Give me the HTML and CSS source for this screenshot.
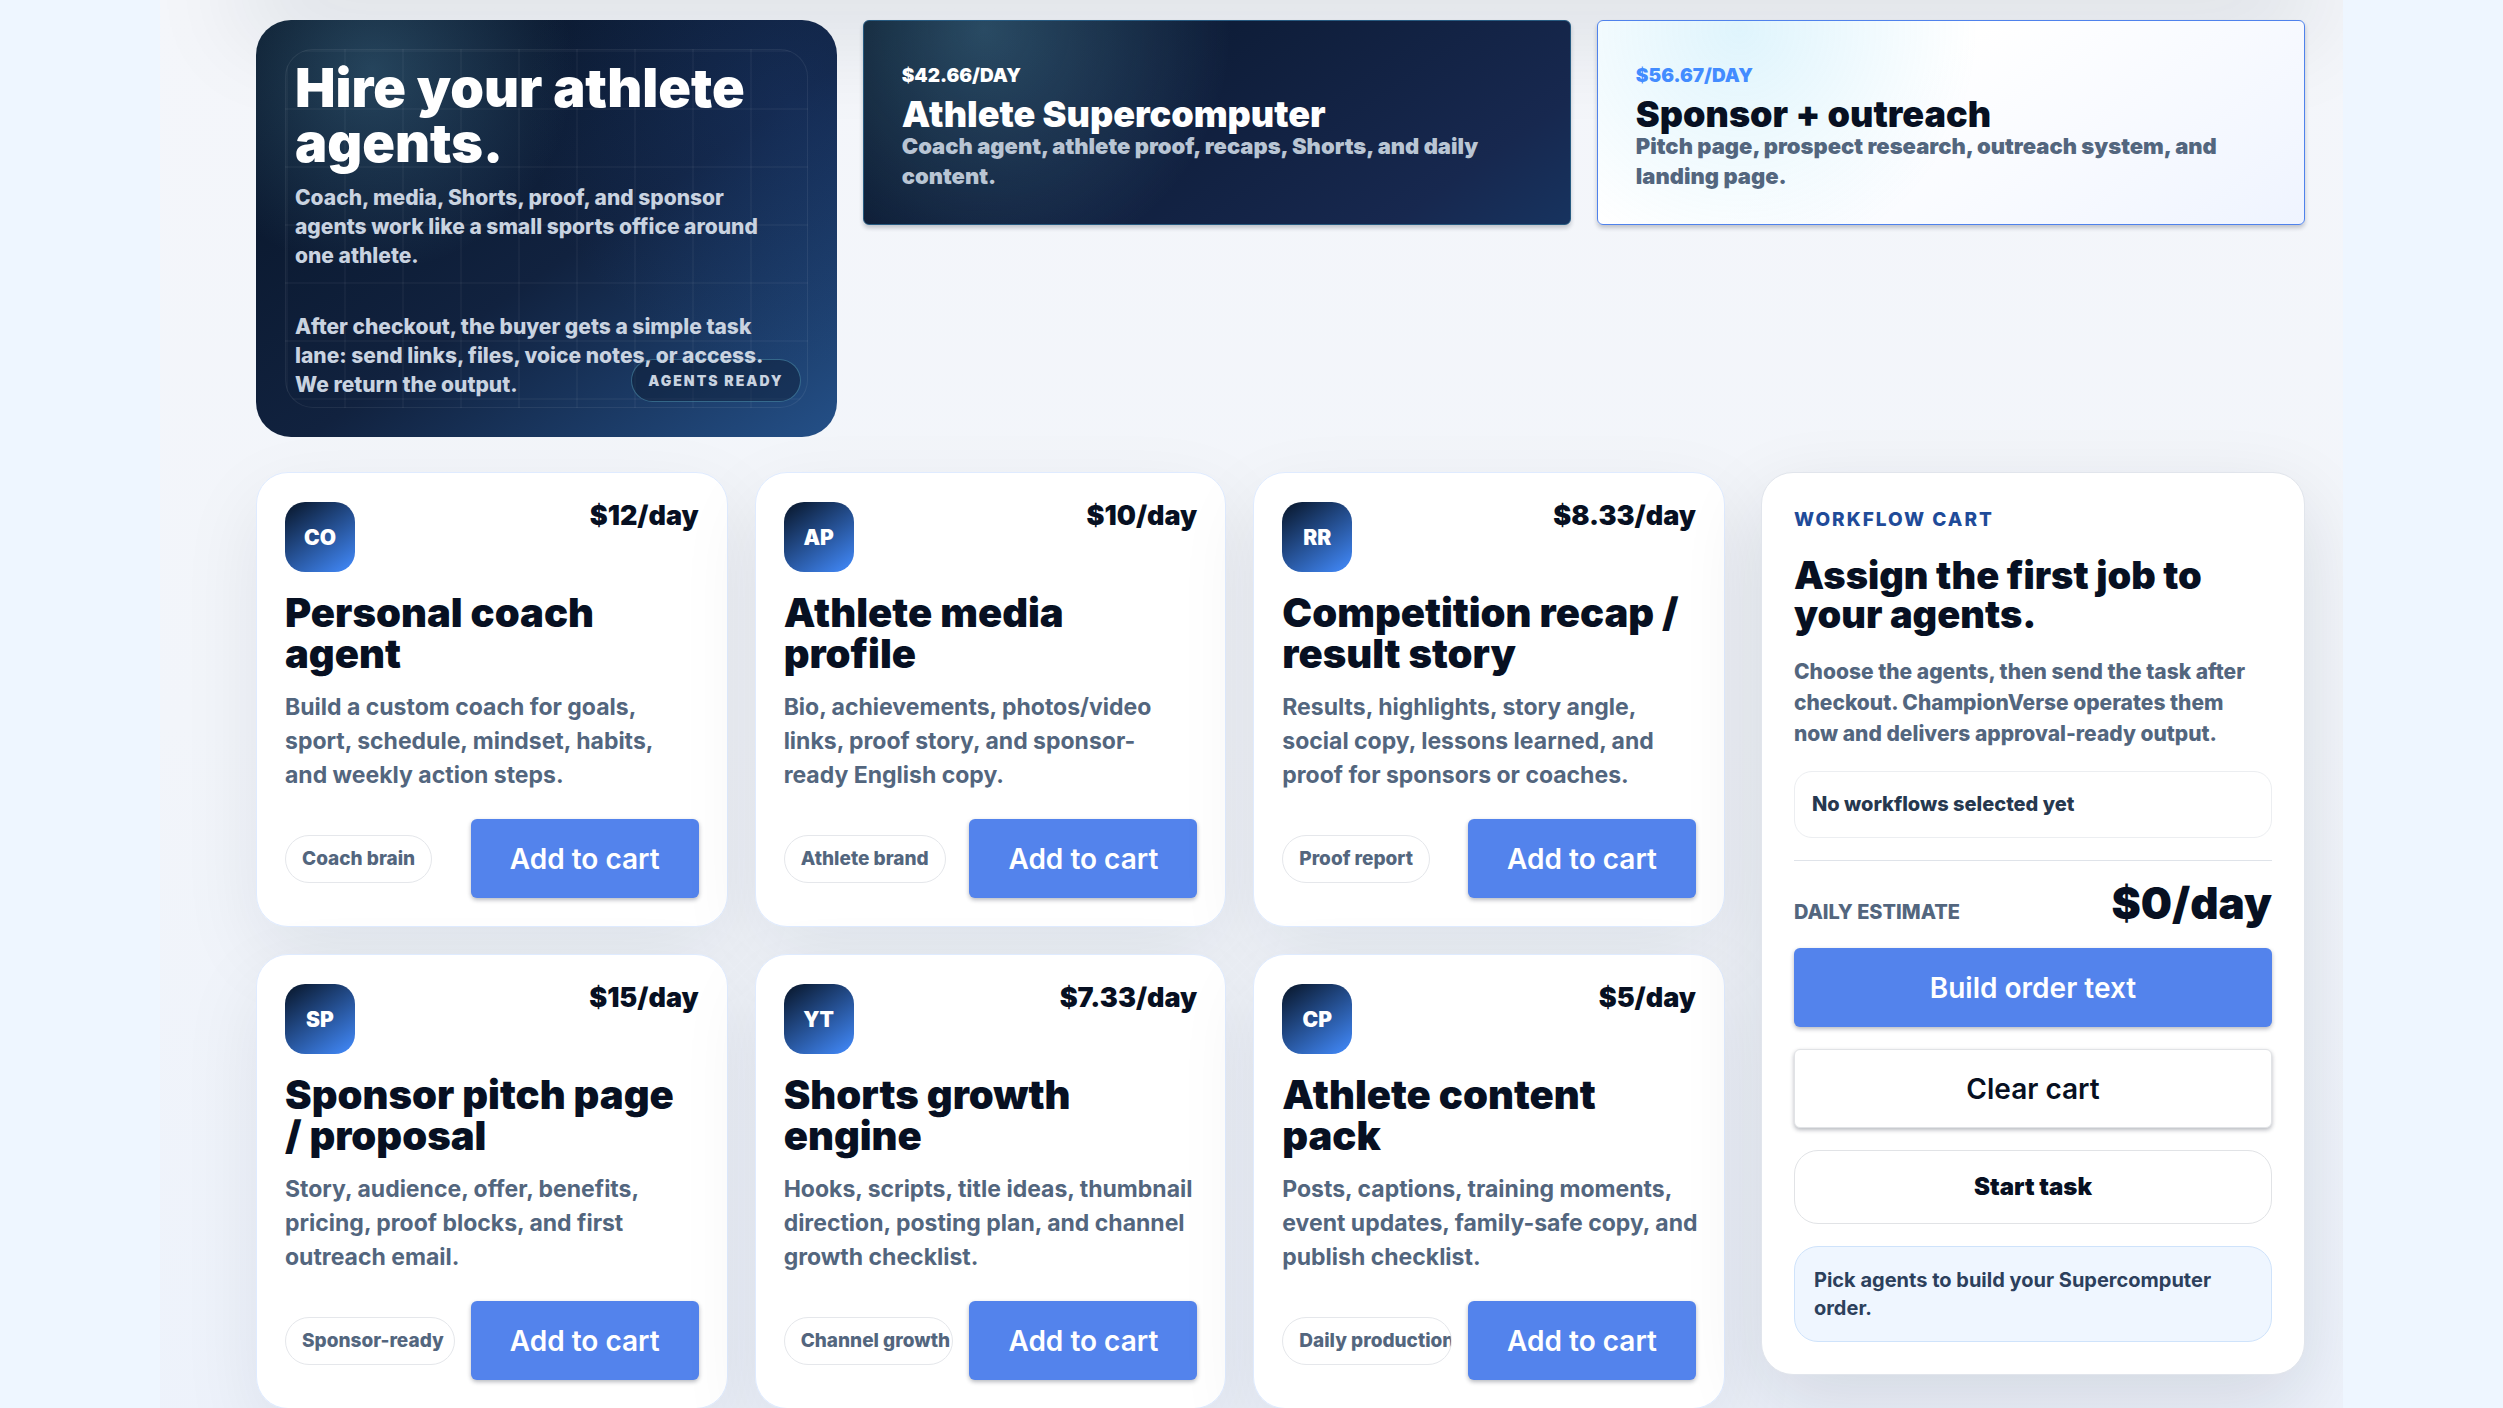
FILE: index.html
```
<!DOCTYPE html>
<html lang="en">
<head>
  <meta charset="UTF-8" />
  <meta name="viewport" content="width=device-width, initial-scale=1" />
  <title>ChampionVerse - Athlete agents</title>
  <link rel="stylesheet" href="styles.css">
</head>
<body>
  <main class="page">
    <section class="plans">
      <article class="hire">
        <h1>Hire your athlete agents.</h1>
        <p>Coach, media, Shorts, proof, and sponsor agents work like a small sports office around one athlete.</p>
        <p class="hire-after">After checkout, the buyer gets a simple task lane: send links, files, voice notes, or access. We return the output.</p>
        <span class="ready">Agents ready</span>
      </article>
      <article class="plan plan-dark">
        <span class="plan-price">$42.66/DAY</span>
        <h2>Athlete Supercomputer</h2>
        <p>Coach agent, athlete proof, recaps, Shorts, and daily content.</p>
      </article>
      <article class="plan plan-light">
        <span class="plan-price">$56.67/DAY</span>
        <h2>Sponsor + outreach</h2>
        <p>Pitch page, prospect research, outreach system, and landing page.</p>
      </article>
    </section>

    <section class="store">
      <div class="cards">
        <article class="card">
          <div class="card-top"><span class="icon">CO</span><strong class="price">$12/day</strong></div>
          <h3>Personal coach agent</h3>
          <p>Build a custom coach for goals, sport, schedule, mindset, habits, and&nbsp;weekly action steps.</p>
          <div class="card-foot"><span class="tag">Coach brain</span><button class="btn" type="button">Add to cart</button></div>
        </article>
        <article class="card">
          <div class="card-top"><span class="icon">AP</span><strong class="price">$10/day</strong></div>
          <h3>Athlete media profile</h3>
          <p>Bio, achievements, photos/video links, proof story, and sponsor-<br>ready English copy.</p>
          <div class="card-foot"><span class="tag">Athlete brand</span><button class="btn" type="button">Add to cart</button></div>
        </article>
        <article class="card">
          <div class="card-top"><span class="icon">RR</span><strong class="price">$8.33/day</strong></div>
          <h3>Competition recap / result story</h3>
          <p>Results, highlights, story angle, social copy, lessons learned, and proof for sponsors or coaches.</p>
          <div class="card-foot"><span class="tag">Proof report</span><button class="btn" type="button">Add to cart</button></div>
        </article>
        <article class="card">
          <div class="card-top"><span class="icon">SP</span><strong class="price">$15/day</strong></div>
          <h3>Sponsor pitch page /&nbsp;proposal</h3>
          <p>Story, audience, offer, benefits, pricing, proof blocks, and first outreach email.</p>
          <div class="card-foot"><span class="tag">Sponsor-ready</span><button class="btn" type="button">Add to cart</button></div>
        </article>
        <article class="card">
          <div class="card-top"><span class="icon">YT</span><strong class="price">$7.33/day</strong></div>
          <h3>Shorts growth engine</h3>
          <p>Hooks, scripts, title ideas, thumbnail direction, posting plan, and channel growth checklist.</p>
          <div class="card-foot"><span class="tag">Channel growth</span><button class="btn" type="button">Add to cart</button></div>
        </article>
        <article class="card">
          <div class="card-top"><span class="icon">CP</span><strong class="price">$5/day</strong></div>
          <h3>Athlete content pack</h3>
          <p>Posts, captions, training moments, event updates, family-safe copy, and publish checklist.</p>
          <div class="card-foot"><span class="tag">Daily production</span><button class="btn" type="button">Add to cart</button></div>
        </article>
      </div>

      <aside class="cart">
        <span class="eyebrow">Workflow cart</span>
        <h2>Assign the first job to your agents.</h2>
        <p>Choose the agents, then send the task after checkout. ChampionVerse operates them now and delivers approval-ready output.</p>
        <div class="cart-empty">No workflows selected yet</div>
        <div class="total"><span>Daily estimate</span><strong>$0/day</strong></div>
        <button class="btn" type="button">Build order text</button>
        <button class="btn btn-plain" type="button">Clear cart</button>
        <a class="start" href="#start">Start task</a>
        <div class="note">Pick agents to build your Supercomputer order.</div>
      </aside>
    </section>
  </main>
</body>
</html>
```

FILE: styles.css
```
* { box-sizing: border-box; }
html { overflow: hidden; }
body {
  margin: 0;
  background: #eef6ff;
  color: #071022;
  font-family: Inter, "Liberation Sans", sans-serif;
}
h1, h2, h3, p { margin: 0; }

.page {
  position: relative;
  width: calc(100% - 320px);
  max-width: 2183px;
  min-height: 100vh;
  margin: 0 auto;
  padding: 20px 38px 40px 96px;
  overflow: hidden;
  background: linear-gradient(180deg, #f4f6fa 0%, #f2f5fa 50%, #edf2fb 100%);
}
/* shadow falling from the section above */
.page::before {
  content: "";
  position: absolute;
  top: -60px;
  left: 96px;
  right: 38px;
  height: 50px;
  box-shadow: 0 28px 100px 10px rgba(15, 28, 42, 0.13);
}

.plans {
  position: relative;
  display: grid;
  grid-template-columns: 82fr 100fr 100fr;
  gap: 26px;
  align-items: start;
}

.hire {
  position: relative;
  overflow: hidden;
  padding: 40px 39px 38px;
  border-radius: 35px;
  color: #fff;
  background:
    radial-gradient(circle at 20% 12%, rgba(108, 182, 214, 0.28), transparent 34%),
    radial-gradient(circle at 92% 20%, rgba(37, 84, 170, 0.2), transparent 42%),
    linear-gradient(145deg, #071426 0%, #11223f 55%, #245088 100%);
}
.hire::before {
  content: "";
  position: absolute;
  inset: 29px;
  border: 1px solid rgba(255, 255, 255, 0.07);
  border-radius: 28px;
  background:
    linear-gradient(rgba(255, 255, 255, 0.035) 2px, transparent 2px) 0 0 / 58px 58px,
    linear-gradient(90deg, rgba(255, 255, 255, 0.035) 2px, transparent 2px) 0 0 / 58px 58px;
}
.hire h1 {
  position: relative;
  z-index: 2;
  font-size: 54px;
  line-height: 55px;
  font-weight: 900;
}
.hire p {
  position: relative;
  z-index: 2;
  margin-top: 13px;
  font-size: 21px;
  line-height: 29px;
  font-weight: 800;
  color: #c9d3e0;
}
.hire .hire-after { margin-top: 42px; }
.ready {
  position: absolute;
  right: 36px;
  bottom: 35px;
  padding: 0 16px;
  border: 1px solid rgba(103, 190, 220, 0.4);
  border-radius: 22px;
  background: rgba(7, 16, 34, 0.36);
  color: #c9d3e0;
  font-size: 14px;
  line-height: 41px;
  font-weight: 900;
  letter-spacing: 2px;
  text-transform: uppercase;
}

.plan {
  padding: 33px 38px;
  border: 1px solid #4f82ec;
  border-radius: 6px;
  box-shadow: 0 3px 4px rgba(15, 23, 42, 0.22);
}
.plan-dark {
  border-color: #275a80;
  color: #fff;
  background:
    radial-gradient(circle at 17% 4%, rgba(108, 182, 214, 0.32), transparent 40%),
    linear-gradient(145deg, #071426 0%, #17284f 82%, #17335f 100%);
}
.plan-light {
  background:
    radial-gradient(circle at 20% 4%, rgba(56, 189, 240, 0.16), transparent 40%),
    linear-gradient(145deg, #ffffff 40%, #eff4ff 100%);
}
.plan-price {
  display: block;
  font-size: 19px;
  line-height: 43px;
  font-weight: 900;
}
.plan-light .plan-price { color: #438cff; }
.plan h2 {
  font-size: 36px;
  line-height: 34px;
  font-weight: 900;
}
.plan p {
  font-size: 22px;
  line-height: 30px;
  font-weight: 900;
  color: #53667e;
}
.plan-dark p { color: #b9c5d4; }

.store {
  position: relative;
  display: grid;
  grid-template-columns: 27fr 10fr;
  gap: 36px;
  align-items: start;
  margin-top: 35px;
}
.cards {
  display: grid;
  grid-template-columns: repeat(3, minmax(0, 1fr));
  gap: 27px;
}
.card {
  padding: 29px 28px 28px;
  border: 1px solid #dfebff;
  border-radius: 32px;
  background: rgba(255, 255, 255, 0.98);
  box-shadow: 0 28px 80px rgba(15, 28, 42, 0.08);
}
.card-top {
  display: flex;
  justify-content: space-between;
  align-items: flex-start;
}
.icon {
  display: grid;
  place-items: center;
  width: 70px;
  height: 70px;
  border-radius: 20px;
  background: linear-gradient(145deg, #071426, #438cff);
  color: #fff;
  font-size: 21px;
  font-weight: 900;
}
.price {
  font-size: 27px;
  line-height: 28px;
  font-weight: 900;
}
.card h3 {
  margin-top: 20px;
  font-size: 40px;
  line-height: 41px;
  font-weight: 900;
}
.card p {
  margin-top: 16px;
  margin-right: -4px;
  font-size: 23px;
  line-height: 34px;
  font-weight: 700;
  color: #53667e;
}
.card-foot {
  display: flex;
  justify-content: space-between;
  align-items: center;
  gap: 16px;
  margin-top: 27px;
}
.tag {
  min-width: 0;
  padding: 0 16px;
  overflow: hidden;
  border: 1px solid #e5e7eb;
  border-radius: 24px;
  color: #53667e;
  font-size: 19px;
  line-height: 46px;
  font-weight: 800;
  white-space: nowrap;
}
.btn {
  flex-shrink: 0;
  height: 79px;
  padding: 0 39px;
  border: 0;
  border-radius: 6px;
  background: #5383ec;
  box-shadow: 0 2px 4px rgba(15, 23, 42, 0.3);
  color: #fff;
  font-family: inherit;
  font-size: 28px;
  font-weight: 600;
  cursor: pointer;
}

.cart {
  display: grid;
  gap: 22px;
  padding: 33px 32px 32px;
  border: 1px solid #e1e5ec;
  border-radius: 32px;
  background: #fff;
  box-shadow: 0 28px 80px rgba(15, 28, 42, 0.12);
}
.eyebrow {
  color: #1f4b99;
  font-size: 19px;
  line-height: 28px;
  font-weight: 800;
  letter-spacing: 2px;
  text-transform: uppercase;
}
.cart h2 {
  font-size: 38px;
  line-height: 39px;
  font-weight: 900;
}
.cart p {
  font-size: 21px;
  line-height: 31px;
  font-weight: 800;
  color: #53667e;
}
.cart-empty {
  padding: 0 17px;
  border: 1px solid #eceef1;
  border-radius: 18px;
  color: #26384f;
  font-size: 20px;
  line-height: 65px;
  font-weight: 800;
}
.total {
  display: flex;
  justify-content: space-between;
  align-items: flex-end;
  padding-top: 20px;
  border-top: 1px solid #dfe3e9;
}
.total span {
  color: #53667e;
  font-size: 20px;
  line-height: 28px;
  font-weight: 800;
  text-transform: uppercase;
}
.total strong {
  font-size: 44px;
  line-height: 45px;
  font-weight: 900;
}
.btn-plain {
  border: 1px solid #e1e3e6;
  background: #fff;
  color: #071022;
}
.start {
  border: 1px solid #e1e3e6;
  border-radius: 24px;
  color: #071022;
  font-size: 24px;
  line-height: 72px;
  font-weight: 900;
  text-align: center;
  text-decoration: none;
}
.note {
  padding: 19px;
  border: 1px solid #cfe3fb;
  border-radius: 24px;
  background: #eff6ff;
  color: #2c405c;
  font-size: 20px;
  line-height: 28px;
  font-weight: 700;
}
```
